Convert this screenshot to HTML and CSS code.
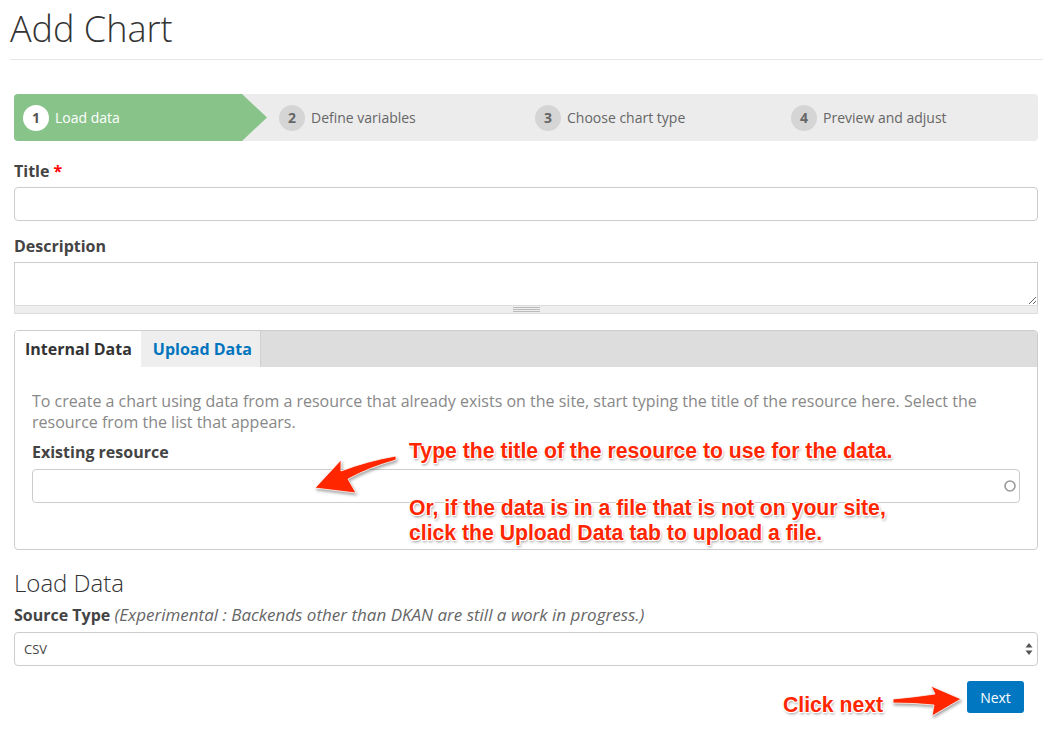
FILE: index.html
```html
<!DOCTYPE html>
<html lang="en">
<head>
<meta charset="utf-8">
<title>Add Chart</title>
<link rel="stylesheet" href="styles.css">
</head>
<body>
<div class="page">
  <header class="page-head">
    <h1>Add Chart</h1>
  </header>
  <form class="form">
    <ol class="steps">
      <li class="step active"><span class="num">1</span>Load data</li>
      <li class="step"><span class="num">2</span>Define variables</li>
      <li class="step"><span class="num">3</span>Choose chart type</li>
      <li class="step"><span class="num">4</span>Preview and adjust</li>
    </ol>

    <div class="field">
      <label class="label">Title <span class="req">*</span></label>
      <input class="text-input" type="text">
    </div>

    <div class="field">
      <label class="label">Description</label>
      <textarea class="textarea"></textarea>
      <div class="grippie"><span class="grip"></span></div>
    </div>

    <div class="tabs">
      <div class="tab-bar">
        <div class="tab active">Internal Data</div>
        <div class="tab link">Upload Data</div>
      </div>
      <div class="tab-body">
        <p class="help">To create a chart using data from a resource that already exists on the site, start typing the title of the resource here. Select the resource from the list that appears.</p>
        <label class="label">Existing resource</label>
        <div class="auto-input">
          <input class="bare-input" type="text">
          <svg class="throbber" width="14" height="14" viewBox="0 0 14 14"><circle cx="7" cy="7" r="5" fill="none" stroke="#999" stroke-width="1.6"/></svg>
        </div>
      </div>
    </div>

    <h3 class="section-title">Load Data</h3>
    <label class="label">Source Type <em class="note">(Experimental : Backends other than DKAN are still a work in progress.)</em></label>
    <div class="select">
      <span class="select-value">CSV</span>
      <svg class="select-arrows" width="8" height="14" viewBox="0 0 8 14"><path d="M4 1 L7.5 5.5 H0.5 Z" fill="#555"/><path d="M4 13 L7.5 8.5 H0.5 Z" fill="#555"/></svg>
    </div>

    <div class="actions">
      <button class="btn" type="button">Next</button>
    </div>
  </form>

  <div class="callout callout-resource">
    <p>Type the title of the resource to use for the data.</p>
    <p class="gap">Or, if the data is in a file that is not on your site,</p>
    <p>click the Upload Data tab to upload a file.</p>
  </div>
  <svg class="arrow arrow-resource" width="100" height="50" viewBox="310 450 100 50">
    <path d="M315 488 L341 460 L341 471 Q367 461 396 456 L396 460 Q370 467 348 479 L356 493 Z" fill="#ff2600" stroke="#fff" stroke-width="0.8"/>
  </svg>

  <div class="callout callout-next">Click next</div>
  <svg class="arrow arrow-next" width="80" height="40" viewBox="888 682 80 40">
    <path d="M893 699 Q915 697 935 694 L931 686 L961 699 L932 716 L934 705 Q915 703 893 703 Z" fill="#ff2600" stroke="#fff" stroke-width="0.8"/>
  </svg>
</div>
</body>
</html>
```

FILE: styles.css
```css
* { box-sizing: border-box; }

html, body {
  margin: 0;
  padding: 0;
  background: #fff;
}

body {
  font-family: "Open Sans", "Noto Sans", sans-serif;
  color: #333;
  font-size: 16px;
}

.page {
  position: relative;
  width: 1053px;
  height: 735px;
  padding: 0 10px;
  overflow: hidden;
}

.page-head {
  border-bottom: 1px solid #e6e6e6;
  padding: 8px 0 9px;
}

.page-head h1 {
  margin: 0;
  font-size: 36px;
  font-weight: 300;
  line-height: 42px;
  color: #333;
}

.form {
  margin: 34px 5px 0 4px;
}

/* Stepper */
.steps {
  list-style: none;
  margin: 0;
  padding: 0;
  display: grid;
  grid-template-columns: repeat(4, 1fr);
  height: 47px;
  background: #ececec;
  border-radius: 4px;
}

.step {
  display: flex;
  align-items: center;
  gap: 6px;
  padding-left: 9px;
  font-size: 14px;
  color: #666;
}

.step.active {
  background: #88c48a;
  color: #fff;
  border-radius: 4px 0 0 4px;
  clip-path: polygon(0 0, calc(100% - 28px) 0, calc(100% - 3px) 50%, calc(100% - 28px) 100%, 0 100%);
}

.num {
  width: 26px;
  height: 26px;
  border-radius: 50%;
  background: #d5d5d5;
  color: #666;
  font-weight: 700;
  font-size: 14px;
  display: flex;
  align-items: center;
  justify-content: center;
}

.step.active .num {
  background: #fff;
  color: #555;
}

/* Fields */
.field {
  margin-top: 20px;
}

.field + .field {
  margin-top: 15px;
}

.label {
  display: block;
  font-weight: 700;
  font-size: 16px;
  line-height: 21px;
  height: 21px;
  color: #444;
  margin-bottom: 5px;
  white-space: nowrap;
}

.req {
  color: #f00;
}

.text-input {
  display: block;
  width: 100%;
  height: 34px;
  border: 1px solid #ccc;
  border-radius: 4px;
  font: inherit;
  padding: 0 10px;
  background: #fff;
}

.textarea {
  display: block;
  width: 100%;
  height: 43px;
  border: 1px solid #ccc;
  border-bottom: none;
  border-radius: 0;
  resize: vertical;
  font: inherit;
  margin: 0;
}

.grippie {
  height: 9px;
  background: #eee;
  border: 1px solid #ddd;
  display: flex;
  align-items: center;
  justify-content: center;
}

.grip {
  width: 27px;
  height: 5px;
  border-top: 1px solid #bbb;
  border-bottom: 1px solid #bbb;
  background: linear-gradient(#bbb, #bbb) center / 100% 1px no-repeat;
}

/* Tabs */
.tabs {
  margin-top: 16px;
  border: 1px solid #ccc;
  border-radius: 4px;
  overflow: hidden;
}

.tab-bar {
  display: flex;
  background: #ddd;
  height: 36px;
}

.tab {
  flex: none;
  white-space: nowrap;
  font-weight: 700;
  font-size: 16px;
  padding: 0 9px 0 10px;
  display: flex;
  align-items: center;
  color: #333;
}

.tab.active {
  background: #fff;
}

.tab.link {
  background: #eee;
  color: #0074bd;
  padding: 0 8px 0 12px;
  border-right: 1px solid #d0d0d0;
}

.tab-body {
  padding: 24px 17px 46px 17px;
}

.help {
  margin: 0 0 9px;
  font-size: 16px;
  line-height: 21px;
  color: #888;
}

.tab-body .label {
  margin-bottom: 6px;
}

.auto-input {
  display: flex;
  align-items: center;
  height: 34px;
  border: 1px solid #ccc;
  border-radius: 4px;
  padding-right: 2px;
}

.bare-input {
  flex: 1;
  border: none;
  outline: none;
  font: inherit;
  height: 100%;
  background: transparent;
}

.throbber {
  display: block;
}

/* Load data */
.section-title {
  margin: 18px 0 7px;
  font-size: 24px;
  font-weight: 300;
  line-height: 30px;
  color: #333;
}

.note {
  font-weight: 400;
  color: #666;
  font-size: 17px;
  line-height: 1;
}

.select {
  display: flex;
  align-items: center;
  justify-content: space-between;
  height: 34px;
  border: 1px solid #ccc;
  border-radius: 4px;
  padding: 0 4px 0 9px;
  margin-top: 6px;
}

.select-value {
  font-size: 13px;
  color: #444;
}

.actions {
  display: flex;
  justify-content: flex-end;
  margin-top: 15px;
  padding-right: 14px;
}

.btn {
  width: 57px;
  height: 32px;
  border: none;
  border-radius: 3px;
  background: #0077c0;
  color: #fff;
  font-family: "Open Sans", sans-serif;
  font-size: 14px;
  padding: 0;
}

/* Annotations */
.callout {
  position: absolute;
  font-family: "Liberation Sans", Arial, sans-serif;
  font-weight: 700;
  font-size: 21.2px;
  line-height: 25px;
  color: #ff2600;
  text-shadow: -1px -1px 0 #fff, 1px -1px 0 #fff, -1px 1px 0 #fff, 1px 1px 0 #fff, 1px 2px 3px rgba(0,0,0,0.45);
  white-space: nowrap;
}

.callout p {
  margin: 0;
}

.callout p.gap {
  margin-top: 32px;
}

.callout-resource {
  left: 409px;
  top: 438px;
}

.callout-next {
  left: 783px;
  top: 692px;
}

.arrow {
  position: absolute;
  filter: drop-shadow(1px 2px 1.5px rgba(0,0,0,0.35));
}

.arrow-resource {
  left: 310px;
  top: 450px;
}

.arrow-next {
  left: 888px;
  top: 682px;
}
```
